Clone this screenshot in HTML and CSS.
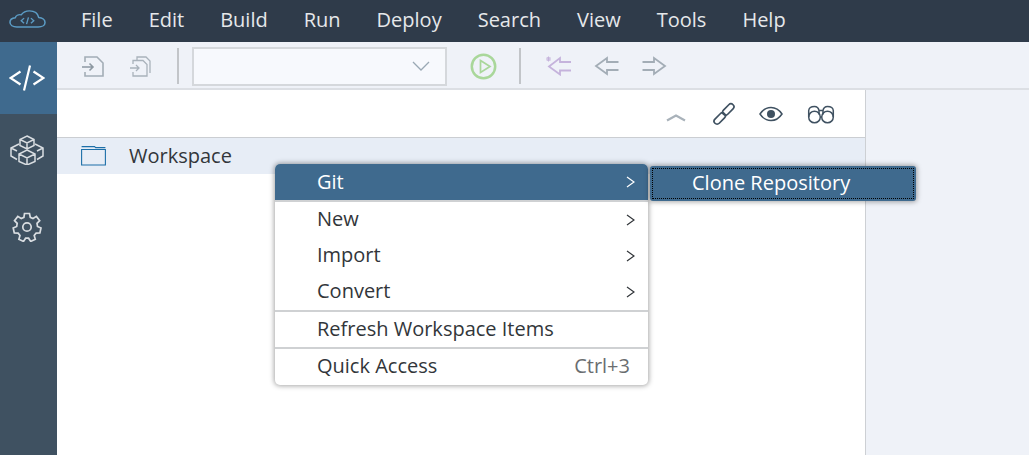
FILE: index.html
```html
<!DOCTYPE html>
<html lang="en">
<head>
<meta charset="utf-8">
<title>Workspace</title>
<link rel="stylesheet" href="styles.css">
</head>
<body>
<div class="app">
  <header class="topbar">
    <div class="logo">
      <svg width="37" height="18" viewBox="0 0 38 21" preserveAspectRatio="none" fill="none" stroke="#5b9bc4" stroke-width="1.600"><path d="M8 19.800C4 19.800 1 17.500 1 14.300c0-3 2.300-5 5.500-5.300C7 6.500 9.500 5 12.500 5.600 14.500 2.500 17.500 1 21 1c5 0 8.700 3 9.500 7.700 3.800.3 6.500 2.700 6.500 5.800 0 3-2.800 5.300-7 5.300z"/><path d="M15.500 9.500l-3 3 3 3M22.500 9.500l3 3-3 3M20 8.500l-2 8" stroke-width="1.400"/></svg>
    </div>
    <nav class="menubar">
      <span>File</span><span>Edit</span><span>Build</span><span>Run</span><span>Deploy</span><span>Search</span><span>View</span><span>Tools</span><span>Help</span>
    </nav>
  </header>
  <div class="body">
    <aside class="rail">
      <div class="rail-item active">
        <svg width="36" height="28" viewBox="0 0 36 28" fill="none" stroke="#fff" stroke-width="2.200"><path d="M11.500 7.500L1.500 14l10 6.500M24.500 7.500L34.500 14l-10 6.500M21 1.500l-6 25"/></svg>
      </div>
      <div class="rail-item">
        <svg width="36" height="30" viewBox="0 0 36 30" fill="none" stroke="#d9dde1" stroke-width="1.500"><path d="M18 1l7 3.500v6l-7 3.500-7-3.500v-6zM11 4.500l7 3.500 7-3.500M18 8v6"/><path d="M10 9L2 13v8l6 3.500M26 9l8 4v8l-6 3.500M2 13l6 3M34 13l-6 3"/><path d="M18 15l8 4v7.500L18 30l-8-3.500V19zM10 19l8 4 8-4M18 23v7"/></svg>
      </div>
      <div class="rail-item">
        <svg width="30" height="30" viewBox="0 0 30 30" fill="none" stroke="#d9dde1" stroke-width="1.700"><path d="M12.500 1.500h5l.8 3.800 2.700 1.200 3.400-2.100 3.300 4.300-2.700 2.700.5 3.100 3.500 1.500-1.100 5-3.800.1-1.900 2.400 1.100 3.700-4.600 2.200-2.100-3.200h-3l-2.100 3.200-4.600-2.200 1.100-3.700-1.900-2.400-3.800-.1-1.100-5 3.500-1.500.5-3.100-2.700-2.700 3.300-4.300 3.400 2.100 2.700-1.200z"/><circle cx="15" cy="15" r="4.200"/></svg>
      </div>
    </aside>
    <main class="main">
      <div class="toolbar">
        <svg class="tool t-save" width="22" height="21" viewBox="0 0 22 21" fill="none" stroke="#a3adb6" stroke-width="1.600"><path d="M3 6V1h12l6 6v13H3v-4"/><path d="M0 11h11M7.500 7.500L11 11l-3.500 3.500" stroke="#8d98a2"/></svg>
        <svg class="tool t-saveall" width="22" height="21" viewBox="0 0 22 21" fill="none" stroke="#a9b2bb" stroke-width="1.300"><path d="M3 8V4.500h10l4 4V20H3v-4"/><path d="M7 4.500V1h9l4 4v12"/><path d="M0 12h9M6 9l3 3-3 3"/></svg>
        <span class="sep"></span>
        <div class="select">
          <svg width="18" height="10" viewBox="0 0 18 10" fill="none" stroke="#9aa8b4" stroke-width="1.300"><path d="M1 1l8 8 8-8"/></svg>
        </div>
        <svg class="tool t-run" width="27" height="27" viewBox="0 0 27 27" fill="none" stroke="#a9d79a" stroke-width="2.500"><circle cx="13.500" cy="13.500" r="11.700"/><path d="M10.500 7.500L20 13.500l-9.500 6z" stroke-width="1.700"/></svg>
        <span class="sep sep-b"></span>
        <svg class="tool t-back" width="26" height="20" viewBox="0 0 26 20" fill="none" stroke="#c5b3dc" stroke-width="1.800"><path d="M25 6H14V2L3 10.500 14 18.500v-4h11"/><path d="M0 3h5M2.500 .5v5M.8 1l3.500 4M4.300 1L.8 5" stroke-width="1"/></svg>
        <svg class="tool t-prev" width="25" height="20" viewBox="0 0 25 20" fill="none" stroke="#a3adb6" stroke-width="1.800"><path d="M24.500 6H13V2L2 10l11 8v-4h11.500"/></svg>
        <svg class="tool t-next" width="25" height="20" viewBox="0 0 25 20" fill="none" stroke="#a3adb6" stroke-width="1.800"><path d="M.5 6H12V2l11 8-11 8v-4H.5"/></svg>
      </div>
      <div class="content">
        <section class="tree">
          <div class="tree-head">
            <svg class="h-up" width="20" height="10" viewBox="0 0 20 10" fill="none" stroke="#a9b2ba" stroke-width="2.200"><path d="M1 8.500l9-5 9 5"/></svg>
            <svg class="h-link" width="24" height="24" viewBox="0 0 24 24" fill="none" stroke="#3f5161" stroke-width="1.700"><rect x="1" y="13.500" width="13.500" height="6" rx="3" transform="rotate(-45 7.750 16.500)"/><rect x="9.500" y="4.500" width="13.500" height="6" rx="3" transform="rotate(-45 16.250 7.500)"/></svg>
            <svg class="h-eye" width="24" height="16" viewBox="0 0 24 16" fill="none" stroke="#3f5161" stroke-width="1.500"><path d="M1 8c3-4.500 7-6.500 11-6.500S20 3.500 23 8c-3 4.500-7 6.500-11 6.500S4 12.500 1 8z"/><circle cx="12" cy="8" r="4" fill="#3f5161" stroke="none"/></svg>
            <svg class="h-glass" width="28" height="20" viewBox="0 0 28 20" fill="none" stroke="#3f5161" stroke-width="1.500"><circle cx="7.500" cy="13" r="5.800"/><circle cx="20.500" cy="13" r="5.800"/><path d="M1.700 13V6.500C2 3.500 4.500 2.500 7.500 2.500s4 1.500 4.500 4v4M26.300 13V6.500C26 3.500 23.500 2.500 20.500 2.500s-4 1.500-4.500 4v4M12 6.500h4"/></svg>
          </div>
          <div class="tree-row">
            <svg width="25" height="20" viewBox="0 0 25 20" fill="none" stroke="#1d6fa8" stroke-width="1.100"><path d="M.6 3.500h23.800V19H.6zM.6 .6h13l1 1h9.800"/></svg>
            <span class="tree-label">Workspace</span>
          </div>
        </section>
        <aside class="side"></aside>
      </div>
    </main>
  </div>

  <div class="menu">
    <div class="mi hot"><span>Git</span><svg class="chev" width="9" height="12" viewBox="0 0 9 12" fill="none" stroke="#fff" stroke-width="1.200"><path d="M1 1l7 5-7 5"/></svg></div>
    <div class="group first">
      <div class="mi"><span>New</span><svg class="chev" width="9" height="12" viewBox="0 0 9 12" fill="none" stroke="#32363a" stroke-width="1.200"><path d="M1 1l7 5-7 5"/></svg></div>
      <div class="mi"><span>Import</span><svg class="chev" width="9" height="12" viewBox="0 0 9 12" fill="none" stroke="#32363a" stroke-width="1.200"><path d="M1 1l7 5-7 5"/></svg></div>
      <div class="mi"><span>Convert</span><svg class="chev" width="9" height="12" viewBox="0 0 9 12" fill="none" stroke="#32363a" stroke-width="1.200"><path d="M1 1l7 5-7 5"/></svg></div>
    </div>
    <div class="group ruled"><div class="mi"><span>Refresh Workspace Items</span></div></div>
    <div class="group ruled"><div class="mi"><span>Quick Access</span><span class="key">Ctrl+3</span></div></div>
  </div>
  <div class="submenu"><div class="sub-in">Clone Repository</div></div>
</div>
</body>
</html>
```
FILE: styles.css
```css
* { box-sizing: border-box; }
html, body { margin: 0; height: 100%; overflow: hidden; }
body { font-family: "Open Sans", "Noto Sans", sans-serif; color: #32363a; }
.app { position: relative; width: 1029px; height: 455px; display: flex; flex-direction: column; background: #fff; }
.topbar { height: 42px; flex: none; background: #2f3b4a; display: flex; align-items: center; }
.logo { width: 57px; display: flex; justify-content: center; padding: 0 3px 5px 0; }
.menubar { display: flex; gap: 36px; margin-left: 24px; font-size: 20px; line-height: 40px; padding-bottom: 2px; color: #e6e8ea; }
.body { flex: 1; display: flex; min-height: 0; }
.rail { width: 57px; flex: none; background: #3f5161; display: flex; flex-direction: column; }
.rail-item { height: 72px; display: flex; align-items: center; justify-content: center; padding-right: 3px; }
.rail-item.active { background: #3f6a8e; }
.rail-item:nth-child(3) { margin-top: 5px; }
.main { flex: 1; display: flex; flex-direction: column; min-width: 0; }
.toolbar { height: 48px; flex: none; background: #eff2f8; border-bottom: 2px solid #dcdfe4; display: flex; align-items: center; padding-top: 2px; }
.tool { flex: none; display: block; }
.t-save { margin-left: 25px; }
.t-saveall { margin-left: 26px; }
.sep { width: 2px; height: 36px; background: #c2c5c9; margin-left: 25px; flex: none; }
.sep-b { margin-left: 22px; }
.select { width: 255px; height: 39px; margin-left: 13px; flex: none; background: #f7f9fd; border: 2px solid #d5d8dc; display: flex; align-items: center; justify-content: flex-end; padding-right: 15px; }
.t-run { margin-left: 23px; }
.t-back { margin-left: 25px; }
.t-prev { margin-left: 22px; }
.t-next { margin-left: 23px; }
.content { flex: 1; display: flex; min-height: 0; }
.tree { width: 809px; flex: none; border-right: 1px solid #cdd0d4; }
.tree-head { height: 48px; border-bottom: 1px solid #cbced2; display: flex; align-items: center; padding-left: 609px; }
.h-up { margin-right: 26px; margin-top: 7px; }
.h-link { margin-right: 23px; }
.h-eye { margin-right: 24px; }
.tree-row { height: 36px; background: #e7edf6; display: flex; align-items: center; padding-left: 24px; }
.tree-label { margin-left: 23px; font-size: 20px; line-height: 36px; }
.side { flex: 1; background: #eff2f8; }
.menu { position: absolute; left: 275px; top: 164px; width: 373px; height: 221px; background: #fff; border-radius: 5px; box-shadow: 0 0 5px 1px rgba(0,0,0,.35); font-size: 20px; overflow: hidden; }
.mi { height: 36px; display: flex; align-items: center; justify-content: space-between; padding: 0 18px 2px 42px; }
.mi.hot { background: #3f6a8e; color: #fff; }
.mi .chev { margin-right: -5px; margin-top: 2px; }
.group { border-top: 2px solid #cfd1d3; }
.group.first .mi { padding-bottom: 4px; }
.group.first .chev { margin-top: 4px; }
.group.ruled .mi { height: 35px; }
.key { color: #6a6d70; }
.submenu { position: absolute; left: 650px; top: 166px; width: 266px; height: 35px; background: #3f6a8e; border-radius: 3px; box-shadow: 0 0 5px 1px rgba(0,0,0,.35); padding: 2px; }
.sub-in { height: 100%; border: 1px dotted #000; color: #fff; font-size: 20px; padding: 0 0 3px 39px; display: flex; align-items: center; }
```
